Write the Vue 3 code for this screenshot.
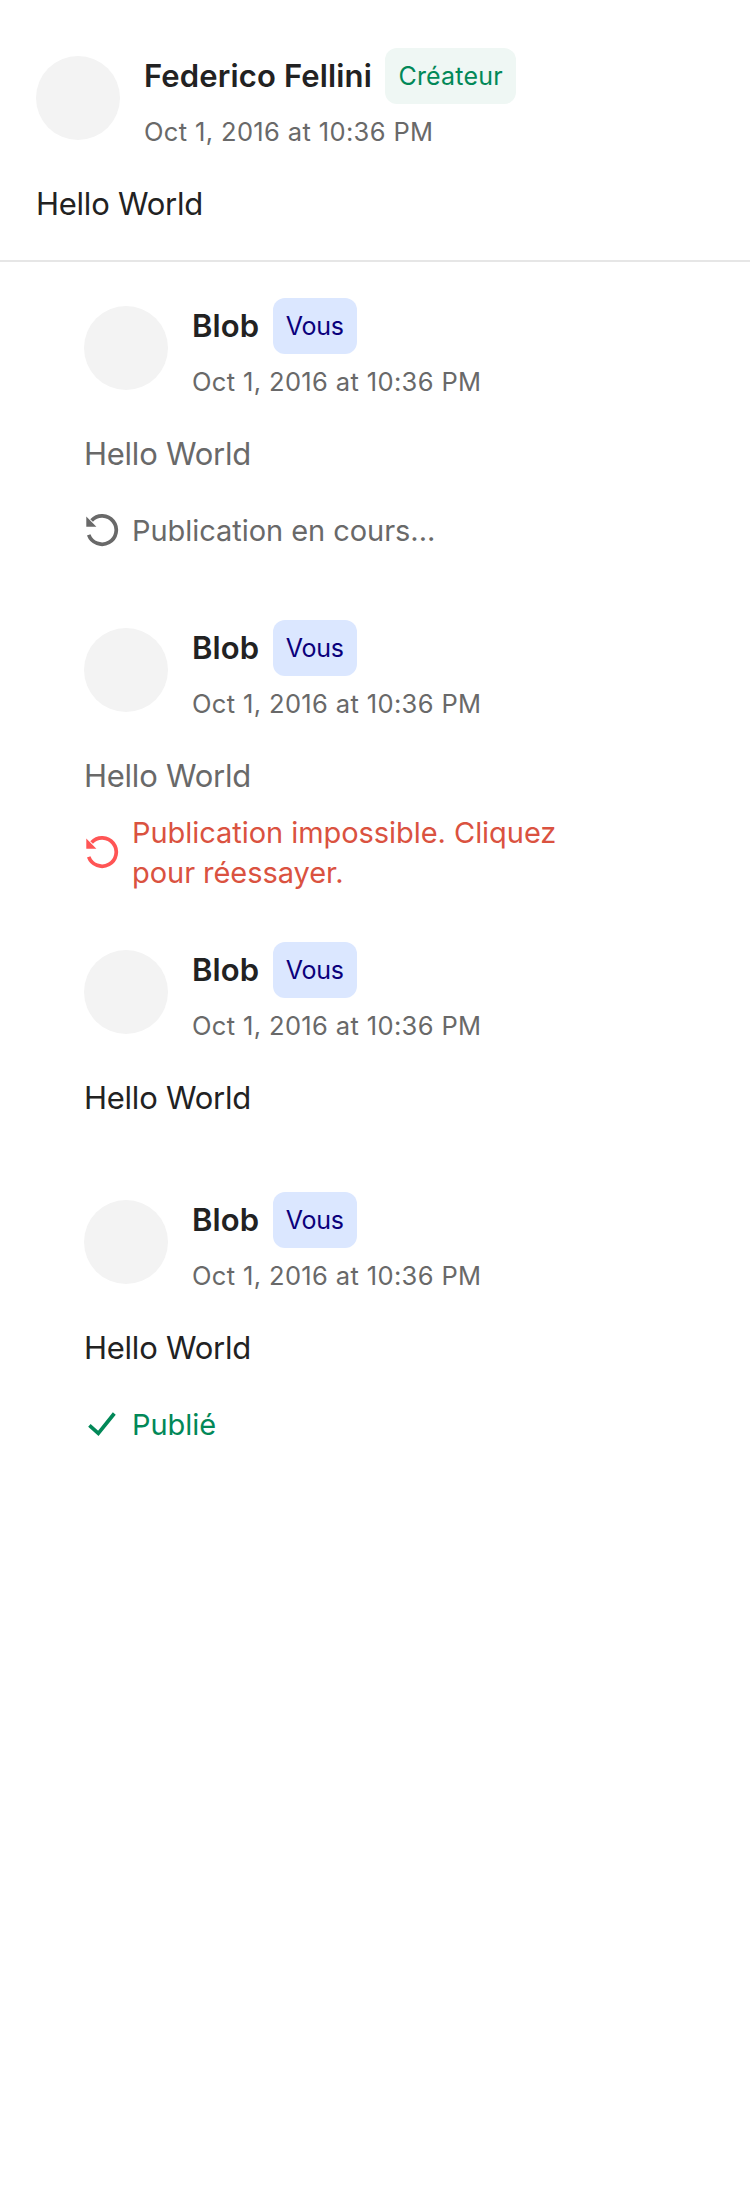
<script setup>
const date = 'Oct 1, 2016 at 10:36 PM'

const comments = [
  { id: 1, author: 'Federico Fellini', badge: 'Créateur', kind: 'creator', root: true },
  { id: 2, author: 'Blob', badge: 'Vous', kind: 'you', muted: true, status: 'pending', label: 'Publication en cours...' },
  { id: 3, author: 'Blob', badge: 'Vous', kind: 'you', muted: true, status: 'failed', label: 'Publication impossible. Cliquez pour réessayer.' },
  { id: 4, author: 'Blob', badge: 'Vous', kind: 'you' },
  { id: 5, author: 'Blob', badge: 'Vous', kind: 'you', status: 'posted', label: 'Publié' },
]
</script>

<template>
  <main class="thread">
    <article
      v-for="c in comments"
      :key="c.id"
      class="comment"
      :class="{ root: c.root, 'has-status': c.status }"
    >
      <header class="head">
        <div class="avatar"></div>
        <div class="meta">
          <div class="author">
            <span class="name">{{ c.author }}</span>
            <span class="badge" :class="c.kind">{{ c.badge }}</span>
          </div>
          <time class="date">{{ date }}</time>
        </div>
      </header>
      <p class="body" :class="{ muted: c.muted }">Hello World</p>
      <div v-if="c.status" class="status" :class="c.status">
        <svg class="icon" viewBox="0 0 36 36" aria-hidden="true">
          <path v-if="c.status === 'posted'" class="stroke" d="M5.4 19.4 14.3 27.4 30.3 7.5" />
          <template v-else>
            <path class="stroke" d="M7.6 8.4A14.2 14.2 0 1 1 4.7 22.9" />
            <path class="fill" d="M2.3 4.6V14.8H12.4L9.2 11.6 6 8.2Z" />
          </template>
        </svg>
        <span class="label">{{ c.label }}</span>
      </div>
    </article>
  </main>
</template>

<style>
body {
  background: #ffffff;
}
</style>

<style scoped>
.thread {
  width: 750px;
  min-height: 2200px;
  box-sizing: border-box;
  background: #ffffff;
  color: #222222;
  font-family: Inter, "Liberation Sans", sans-serif;
  display: flex;
  flex-direction: column;
}
.comment {
  box-sizing: border-box;
  height: 250px;
  padding: 0 84px;
}
.comment.has-status {
  height: 322px;
}
.comment.root {
  height: 262px;
  padding: 48px 36px 0;
  border-bottom: 2px solid #e6e6e6;
  margin-bottom: 36px;
}
.head {
  display: flex;
  gap: 24px;
  height: 100px;
}
.avatar {
  width: 84px;
  height: 84px;
  margin-top: 8px;
  border-radius: 50%;
  background: #f3f3f3;
  flex: none;
}
.author {
  display: flex;
  align-items: center;
  gap: 13.5px;
  height: 56px;
}
.name {
  font-size: 31px;
  line-height: 40px;
  font-weight: 600;
  letter-spacing: 0.14px;
  white-space: nowrap;
}
.badge {
  height: 56px;
  padding: 0 13px;
  border-radius: 12px;
  font-size: 25px;
  line-height: 56px;
  white-space: nowrap;
}
.badge.creator {
  background: #eff7f4;
  color: #028858;
  letter-spacing: 0.2px;
}
.badge.you {
  background: #dbe7ff;
  color: #0a007c;
  letter-spacing: -0.25px;
}
.date {
  display: block;
  margin-top: 12px;
  font-size: 25.5px;
  line-height: 32px;
  letter-spacing: 0.36px;
  color: #696969;
  white-space: nowrap;
}
.body {
  margin: 36px 0 0;
  font-size: 31px;
  line-height: 40px;
  letter-spacing: -0.25px;
}
.body.muted {
  color: #696969;
}
.status {
  display: flex;
  align-items: center;
  gap: 12px;
  height: 80px;
  margin-top: 16px;
}
.icon {
  width: 36px;
  height: 36px;
  flex: none;
}
.stroke {
  fill: none;
  stroke: currentColor;
  stroke-width: 3.7;
}
.fill {
  fill: currentColor;
}
.label {
  max-width: 450px;
  padding-top: 2px;
  font-size: 29px;
  line-height: 40px;
  letter-spacing: -0.05px;
}
.pending {
  color: #696969;
}
.failed {
  color: #ff5555;
}
.failed .label {
  color: #da5240;
}
.posted {
  color: #028858;
}
</style>
